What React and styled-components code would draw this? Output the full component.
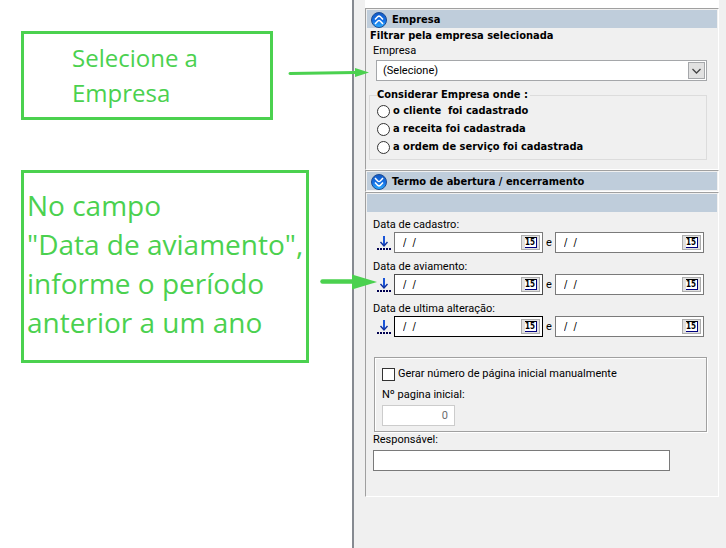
import React, { useId, useState } from "react";
import styled, { createGlobalStyle } from "styled-components";

const GREEN = "#4bd14f";
const FACE = "#f0f0f0";
const SHADOW = "#a0a0a0";
const BOLD_FONT = 'Tahoma, "DejaVu Sans Condensed", "DejaVu Sans", sans-serif';

const origins = [
  { id: "cliente", label: "o cliente  foi cadastrado" },
  { id: "receita", label: "a receita foi cadastrada" },
  { id: "ordem", label: "a ordem de serviço foi cadastrada" },
];

const periods = [
  { id: "cadastro", label: "Data de cadastro:", color: "#7a7a7a" },
  { id: "aviamento", label: "Data de aviamento:", color: "#4c4c4c" },
  { id: "alteracao", label: "Data de ultima alteração:", color: "#000000" },
];

const RoundChevrons = ({ down }) => (
  <ToggleIcon viewBox="0 0 16 16" aria-hidden="true">
    <defs>
      <linearGradient id={down ? "ballDown" : "ballUp"} x1="0" y1="0" x2="0" y2="1">
        <stop offset="0" stopColor="#1259c4" />
        <stop offset="0.55" stopColor="#1471e6" />
        <stop offset="1" stopColor="#2fb0ff" />
      </linearGradient>
    </defs>
    <circle cx="8" cy="8" r="7.5" fill={`url(#${down ? "ballDown" : "ballUp"})`} stroke="#1c4c94" />
    <g fill="none" stroke="#ffffff" strokeWidth="1.5" transform={down ? "rotate(180 8 8)" : undefined}>
      <path d="M4 7.6 L6.8 4.6 Q8 3.6 9.2 4.6 L12 7.6" />
      <path d="M4 12 L6.8 9 Q8 8 9.2 9 L12 12" />
    </g>
  </ToggleIcon>
);

const ArrowToLine = () => (
  <svg width="14" height="14" viewBox="0 0 14 14" aria-hidden="true">
    <path d="M7 0 V10" stroke="#1a55d8" strokeWidth="2" />
    <path d="M3.5 6 L7 10 L10.5 6" fill="none" stroke="#10309c" strokeWidth="1.4" />
    <path d="M0 13 H14" stroke="#000050" strokeWidth="2" strokeDasharray="2 1" />
  </svg>
);

const DateBox = ({ label, color }) => {
  const [value, setValue] = useState("/  /");
  return (
    <DateFrame $color={color}>
      <DateInput aria-label={label} value={value} onChange={(e) => setValue(e.target.value)} />
      <CalendarButton type="button" aria-label={`Calendário ${label}`}>
        <CalendarFace>15</CalendarFace>
      </CalendarButton>
    </DateFrame>
  );
};

const Period = ({ label, color }) => (
  <PeriodBlock>
    <Label as="span">{label}</Label>
    <PeriodRow>
      <IconButton type="button" aria-label={`Preencher ${label}`}>
        <ArrowToLine />
      </IconButton>
      <DateBox label={`${label} início`} color={color} />
      <Between>e</Between>
      <DateBox label={`${label} fim`} color="#7a7a7a" />
    </PeriodRow>
  </PeriodBlock>
);

const App = () => {
  const id = useId();
  const [origin, setOrigin] = useState("");
  const [manual, setManual] = useState(false);

  return (
    <>
      <GlobalStyle />
      <Page>
        <Notes>
          <NoteRow>
            <Note $small>
              Selecione a<br />
              Empresa
            </Note>
            <NoteArrow width="82" height="12" viewBox="0 0 82 12" $top={36} $end={18} aria-hidden="true">
              <path d="M2 6.5 L67 5.5" stroke={GREEN} strokeWidth="3" strokeLinecap="round" />
              <path d="M67 1 L81 5.5 L67 10 Z" fill={GREEN} />
            </NoteArrow>
          </NoteRow>
          <NoteRow>
            <Note>
              No campo
              <br />
              "Data de aviamento",
              <br />
              informe o período
              <br />
              anterior a um ano
            </Note>
            <NoteArrow width="57" height="16" viewBox="0 0 57 16" $top={104} $end={25} aria-hidden="true">
              <path d="M2.5 7.5 H34" stroke={GREEN} strokeWidth="4.5" strokeLinecap="round" />
              <path d="M32 0.5 L57 8 L32 15.5 Z" fill={GREEN} />
            </NoteArrow>
          </NoteRow>
        </Notes>

        <Panel>
          <Column>
            <Section>
              <SectionHeader>
                <RoundChevrons />
                Empresa
              </SectionHeader>
              <FilterTitle>Filtrar pela empresa selecionada</FilterTitle>
              <CompanyField>
                <Label htmlFor={`${id}-empresa`}>Empresa</Label>
                <SelectFrame>
                  <Select id={`${id}-empresa`}>
                    <option>(Selecione)</option>
                  </Select>
                  <SelectArrow viewBox="0 0 17 17" aria-hidden="true">
                    <rect x="0.5" y="0.5" width="16" height="16" fill="#e1e1e1" stroke="#a5a7aa" />
                    <path d="M4.5 7 L8.5 11 L12.5 7" fill="none" stroke="#444" strokeWidth="1.3" />
                  </SelectArrow>
                </SelectFrame>
              </CompanyField>
              <Origins>
                <Legend>Considerar Empresa onde :</Legend>
                {origins.map((item) => (
                  <Choice key={item.id}>
                    <Radio
                      name={`${id}-origem`}
                      checked={origin === item.id}
                      onChange={() => setOrigin(item.id)}
                    />
                    {item.label}
                  </Choice>
                ))}
              </Origins>
            </Section>

            <Section>
              <SectionHeader>
                <RoundChevrons down />
                Termo de abertura / encerramento
              </SectionHeader>
            </Section>

            <Section>
              <SectionHeader />
              <Form>
                {periods.map((period) => (
                  <Period key={period.id} label={period.label} color={period.color} />
                ))}
                <PageNumberBox>
                  <CheckRow>
                    <Checkbox checked={manual} onChange={() => setManual(!manual)} />
                    Gerar número de página inicial manualmente
                  </CheckRow>
                  <Label htmlFor={`${id}-pagina`}>Nº pagina inicial:</Label>
                  <PageInput id={`${id}-pagina`} defaultValue="0" disabled={!manual} />
                </PageNumberBox>
                <Label htmlFor={`${id}-responsavel`}>Responsável:</Label>
                <OwnerInput id={`${id}-responsavel`} />
              </Form>
            </Section>
          </Column>
        </Panel>
      </Page>
    </>
  );
};

export default App;

const GlobalStyle = createGlobalStyle`
  * {
    box-sizing: border-box;
  }

  body {
    margin: 0;
    background: #ffffff;
    color: #000000;
    font-family: Roboto, "Open Sans", sans-serif;
    font-size: 11px;
    line-height: 14px;
  }

  input, select, button {
    font: inherit;
    color: inherit;
    margin: 0;
  }
`;

const Page = styled.div`
  display: grid;
  grid-template-columns: minmax(0, 352fr) minmax(0, 374fr);
  min-height: 100vh;
`;

const Notes = styled.div`
  display: flex;
  flex-direction: column;
  gap: 50px;
  padding: 31px 0 20px 21px;
`;

const NoteRow = styled.div`
  position: relative;
`;

const Note = styled.div`
  width: ${({ $small }) => ($small ? "76%" : "87%")};
  padding: ${({ $small }) => ($small ? "6px 0 7px 48px" : "13px 0 18px 3px")};
  border: 3px solid ${GREEN};
  color: ${GREEN};
  font-family: "Open Sans", "Noto Sans", sans-serif;
  font-size: ${({ $small }) => ($small ? 24 : 28)}px;
  line-height: ${({ $small }) => ($small ? 35 : 39)}px;
  white-space: nowrap;
`;

// As setas passam por cima da borda do painel
const NoteArrow = styled.svg`
  position: absolute;
  z-index: 1;
  top: ${({ $top }) => $top}px;
  right: -${({ $end }) => $end}px;
`;

const Panel = styled.div`
  padding: 0 7px 0 11px;
  border-left: 2px solid #868a91;
  background: ${FACE};
`;

const Column = styled.div`
  padding-top: 8px;
  background: #ffffff;
`;

const Section = styled.section`
  padding: 1px;
  border: 1px solid;
  border-color: ${SHADOW} #ffffff #ffffff ${SHADOW};
  background: ${FACE};
`;

const SectionHeader = styled.header`
  display: flex;
  align-items: center;
  gap: 5px;
  height: 18px;
  padding: 1px 0 0 4px;
  background: #bfcddb;
  font-family: ${BOLD_FONT};
  font-weight: bold;
`;

const ToggleIcon = styled.svg`
  flex: none;
  width: 16px;
  height: 16px;
`;

const FilterTitle = styled.div`
  padding: 1px 0 0 3px;
  font-family: ${BOLD_FONT};
  font-weight: bold;
`;

const Label = styled.label`
  display: block;
`;

const CompanyField = styled.div`
  padding: 1px 10px 0 6px;
`;

const SelectFrame = styled.div`
  position: relative;
  margin: 2px 0 0 3px;
`;

const Select = styled.select`
  display: block;
  width: 100%;
  height: 21px;
  padding: 0 20px 0 6px;
  border: 1px solid #a5a7aa;
  border-radius: 0;
  background: #ffffff;
  appearance: none;
`;

const SelectArrow = styled.svg`
  position: absolute;
  top: 2px;
  right: 2px;
  width: 17px;
  height: 17px;
  pointer-events: none;
`;

const Origins = styled.fieldset`
  display: flex;
  flex-direction: column;
  margin: 7px 10px 8px 2px;
  padding: 0 0 3px 7px;
  border: 1px solid #dcdcdc;
  font-family: ${BOLD_FONT};
  font-weight: bold;
`;

const Legend = styled.legend`
  padding: 0 2px 0 0;
`;

const Choice = styled.label`
  display: flex;
  align-items: center;
  gap: 3px;
  height: 18px;
  white-space: pre;
`;

const Radio = styled.input.attrs({ type: "radio" })`
  width: 13px;
  height: 13px;
  border: 1px solid #333333;
  border-radius: 50%;
  background: #ffffff;
  appearance: none;

  &:checked {
    background: radial-gradient(#222222 3px, #ffffff 4px);
  }
`;

const Form = styled.div`
  padding: 6px 10px 24px 6px;
`;

const PeriodBlock = styled.div`
  margin-bottom: 7px;
`;

const PeriodRow = styled.div`
  display: flex;
  align-items: center;
  gap: 2px;
  margin: 0 3px 0 4px;
`;

const IconButton = styled.button`
  display: flex;
  flex: none;
  padding: 0 1px 0 0;
  border: 0;
  background: none;
`;

const DateFrame = styled.div`
  display: flex;
  flex: 1;
  align-items: center;
  min-width: 0;
  height: 21px;
  padding-right: 2px;
  border: 1px solid ${({ $color }) => $color};
  background: #ffffff;
`;

const DateInput = styled.input`
  flex: 1;
  min-width: 0;
  padding: 0 0 0 8px;
  border: 0;
  background: none;
  outline: none;
  font-family: ${BOLD_FONT};
  white-space: pre;
`;

const CalendarButton = styled.button`
  display: flex;
  align-items: center;
  justify-content: center;
  flex: none;
  width: 19px;
  height: 15px;
  padding: 0;
  border: 1px solid #adadad;
  background: #e1e1e1;
`;

const CalendarFace = styled.span`
  width: 12px;
  height: 11px;
  border-top: 1px solid #000000;
  border-right: 1px solid #000080;
  border-bottom: 1px solid #000080;
  background: #ffffff;
  font-family: ${BOLD_FONT};
  font-size: 8px;
  font-weight: bold;
  line-height: 9px;
  text-align: center;
`;

const Between = styled.span`
  flex: none;
  width: 8px;
  text-align: center;
`;

const PageNumberBox = styled.div`
  margin: 20px 0 1px 1px;
  padding: 9px 7px 5px;
  border: 1px solid ${SHADOW};
  box-shadow: 1px 1px 0 #ffffff, inset 1px 1px 0 #ffffff;
`;

const CheckRow = styled.label`
  display: flex;
  align-items: center;
  gap: 3px;
  margin-bottom: 7px;
`;

const Checkbox = styled.input.attrs({ type: "checkbox" })`
  flex: none;
  width: 13px;
  height: 13px;
  border: 1px solid #333333;
  background: #ffffff;
  appearance: none;

  &:checked {
    background: linear-gradient(#333333, #333333) center / 7px 7px no-repeat #ffffff;
  }
`;

const PageInput = styled.input`
  display: block;
  width: 73px;
  height: 21px;
  margin-top: 3px;
  padding: 0 6px;
  border: 1px solid #cccccc;
  background: #ffffff;
  color: #6d6d6d;
  text-align: right;
`;

const OwnerInput = styled.input`
  display: block;
  width: 89%;
  height: 21px;
  margin-top: 3px;
  padding: 0 4px;
  border: 1px solid #7a7a7a;
  background: #ffffff;
`;
